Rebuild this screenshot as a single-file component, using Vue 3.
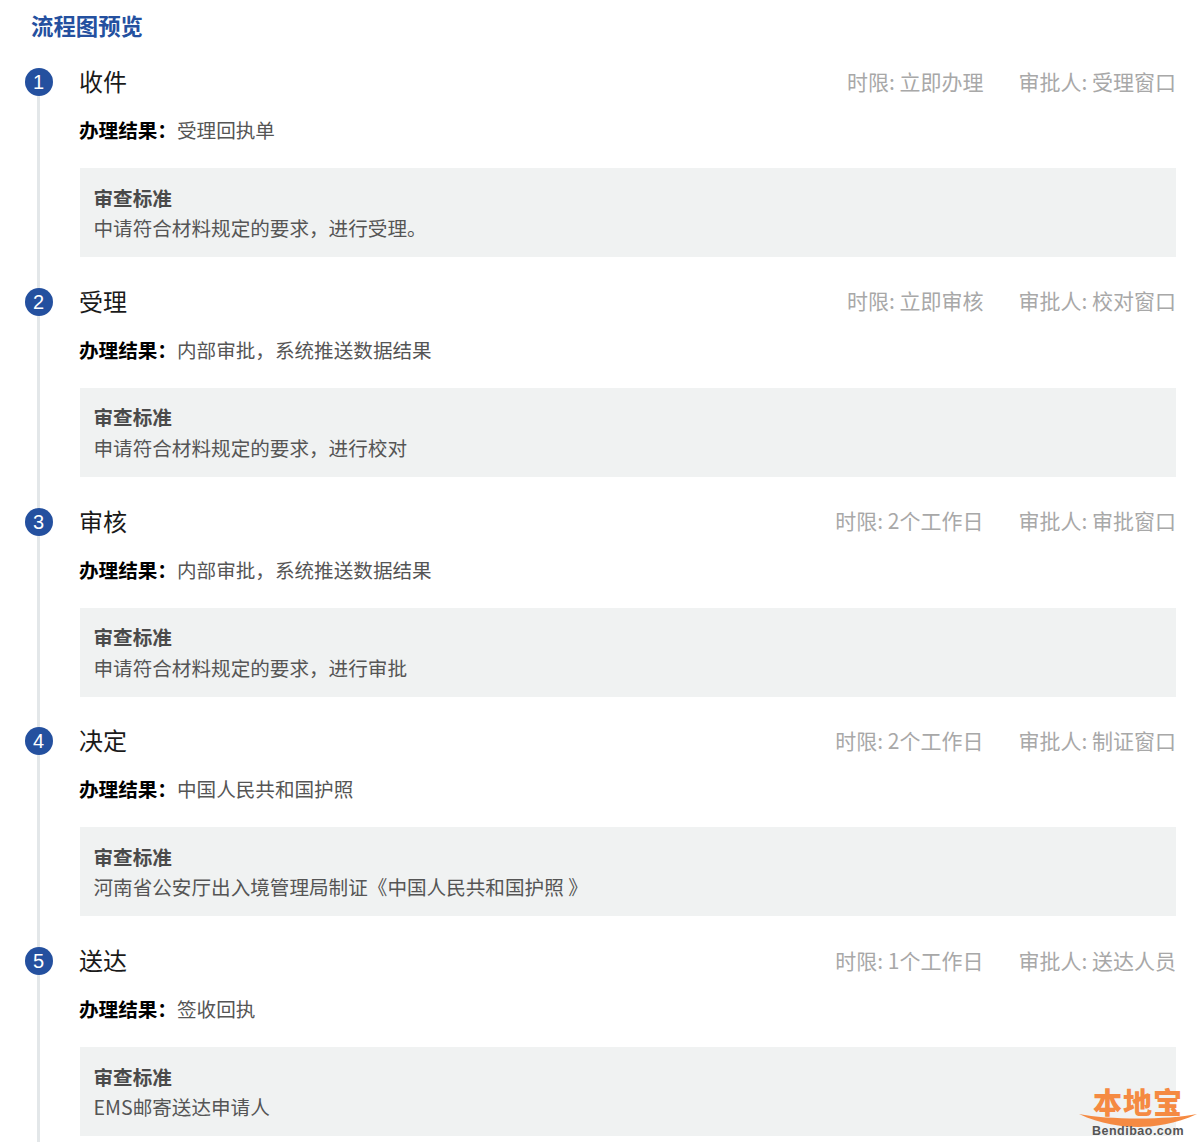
<script setup>
const steps = [
  { name: '收件', limit: '立即办理', approver: '受理窗口', result: '受理回执单', standard: '中请符合材料规定的要求，进行受理。' },
  { name: '受理', limit: '立即审核', approver: '校对窗口', result: '内部审批，系统推送数据结果', standard: '申请符合材料规定的要求，进行校对' },
  { name: '审核', limit: '2个工作日', approver: '审批窗口', result: '内部审批，系统推送数据结果', standard: '申请符合材料规定的要求，进行审批' },
  { name: '决定', limit: '2个工作日', approver: '制证窗口', result: '中国人民共和国护照', standard: '河南省公安厅出入境管理局制证《中国人民共和国护照 》' },
  { name: '送达', limit: '1个工作日', approver: '送达人员', result: '签收回执', standard: 'EMS邮寄送达申请人' }
]
</script>

<template>
  <div class="page">
    <h2 class="title">流程图预览</h2>
    <ol class="steps">
      <li v-for="(step, i) in steps" :key="step.name" class="step">
        <div class="marker">
          <span class="dot">{{ i + 1 }}</span>
        </div>
        <div class="body">
          <div class="head">
            <span class="name">{{ step.name }}</span>
            <div class="meta">
              <span>时限: {{ step.limit }}</span>
              <span>审批人: {{ step.approver }}</span>
            </div>
          </div>
          <p class="result"><b>办理结果：</b>{{ step.result }}</p>
          <div class="box">
            <strong>审查标准</strong>
            <span>{{ step.standard }}</span>
          </div>
        </div>
      </li>
    </ol>
    <div class="logo">
      <span class="logo-cn">本地宝</span>
      <svg class="swoosh" width="120" height="15" viewBox="0 0 120 15">
        <path d="M1 1 C30 7 90 7 119 1 C98 11 75 14 60 14 C45 14 22 11 1 1 Z" fill="#f58a42" />
      </svg>
      <span class="logo-en">Bendibao.com</span>
    </div>
  </div>
</template>

<style scoped>
.page {
  position: relative;
  height: 1142px;
  overflow: hidden;
  background: #fff;
  font-family: "Noto Sans CJK SC", "Liberation Sans", sans-serif;
  box-sizing: border-box;
  padding-top: 10px;
}
.title {
  margin: 0 0 22px 31px;
  height: 30px;
  font-size: 22.4px;
  line-height: 30px;
  font-weight: 700;
  color: #24509f;
}
.steps {
  list-style: none;
  margin: 0;
  padding: 0;
}
.step {
  display: flex;
  height: 219.75px;
}
.marker {
  position: relative;
  width: 80px;
  flex: none;
}
.marker::before {
  content: "";
  position: absolute;
  left: 37px;
  top: 20px;
  width: 3px;
  height: 220px;
  background: #e3e7e9;
}
.dot {
  position: absolute;
  left: 25px;
  top: 6px;
  width: 28px;
  height: 28px;
  border-radius: 50%;
  background: #24509f;
  color: #fff;
  font-family: "Liberation Sans", sans-serif;
  font-size: 20px;
  line-height: 29px;
  text-indent: -1px;
  text-align: center;
}
.body {
  flex: 1;
  min-width: 0;
  margin-right: 24px;
}
.head {
  display: flex;
  justify-content: space-between;
  align-items: center;
  height: 37px;
  padding-bottom: 3px;
}
.name {
  margin-left: -1px;
  font-size: 24px;
  color: #1a1a1a;
}
.meta {
  display: flex;
  gap: 35px;
  font-size: 21px;
  color: #a8a8a8;
}
.result {
  margin: 13px 0 0 -1px;
  height: 30px;
  font-size: 19.6px;
  line-height: 30px;
  color: #555;
}
.result b {
  color: #000;
  font-weight: 700;
}
.box {
  display: flex;
  flex-direction: column;
  margin-top: 23px;
  height: 89px;
  box-sizing: border-box;
  padding: 14.5px 14px 13px 13.5px;
  background: #f0f2f2;
  font-size: 19.6px;
  line-height: 30.5px;
  color: #555;
}
.box strong {
  color: #4a4a4a;
  font-weight: 700;
}
.logo {
  position: absolute;
  right: 2px;
  bottom: 4px;
  width: 120px;
  display: flex;
  flex-direction: column;
  align-items: center;
}
.logo-cn {
  font-size: 29px;
  line-height: 30px;
  font-weight: 900;
  color: #f58a42;
  letter-spacing: 1px;
}
.swoosh {
  display: block;
  margin-top: -3px;
}
.logo-en {
  margin-top: -4px;
  font-family: "Liberation Sans", sans-serif;
  font-size: 12.5px;
  line-height: 14px;
  font-weight: 700;
  letter-spacing: 0.5px;
  color: #555;
}
</style>
